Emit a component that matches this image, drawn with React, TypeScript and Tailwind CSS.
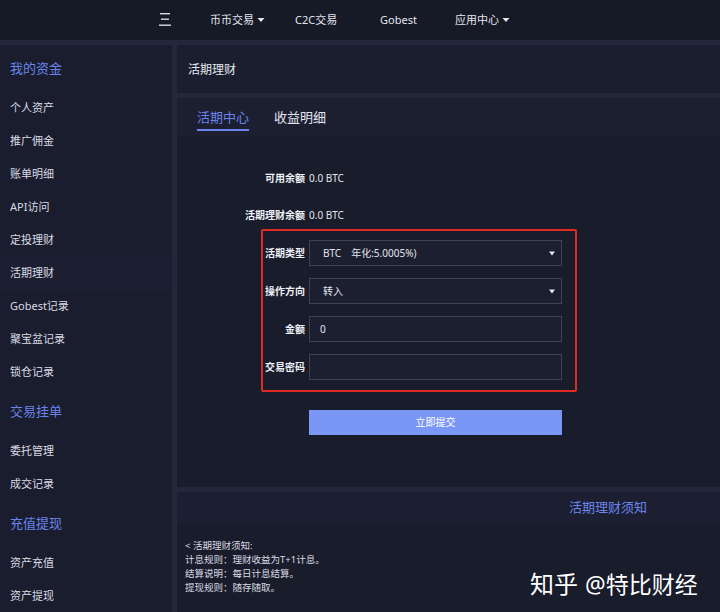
import React from "react";

const font = { fontFamily: '"Noto Sans","Noto Sans CJK SC",sans-serif' };

function Caret() {
  return (
    <svg width="8" height="6" viewBox="0 0 8 6" className="ml-[3px] inline-block">
      <path d="M0.5 1 L7.5 1 L4 5 Z" fill="#e5e7ee" />
    </svg>
  );
}

function SelCaret() {
  return (
    <svg width="6" height="5" viewBox="0 0 6 5">
      <path d="M0 0.5 L6 0.5 L3 4.5 Z" fill="#e5e7ee" />
    </svg>
  );
}

const sideGroups: { title: string; items: string[] }[] = [
  { title: "我的资金", items: ["个人资产", "推广佣金", "账单明细", "API访问", "定投理财", "活期理财", "Gobest记录", "聚宝盆记录", "锁仓记录"] },
  { title: "交易挂单", items: ["委托管理", "成交记录"] },
  { title: "充值提现", items: ["资产充值", "资产提现"] },
];

export default function App() {
  return (
    <div className="relative w-[720px] h-[612px] overflow-hidden bg-[#23273a] text-[#e3e5ee]" style={font}>
      {/* Header */}
      <div className="h-[40px] bg-[#161926] flex items-center text-[11px]">
        <div className="w-[158px]" />
        <svg width="14" height="13" viewBox="0 0 14 13" className="mt-[-2px]">
          <rect x="2" y="0" width="10" height="1.4" fill="#d8dae3" />
          <rect x="3" y="5.5" width="8" height="1.4" fill="#d8dae3" />
          <rect x="1" y="11.5" width="12" height="1.4" fill="#d8dae3" />
        </svg>
        <div className="ml-[38px] w-[85px] flex items-center">币币交易<Caret /></div>
        <div className="w-[85px]">C2C交易</div>
        <div className="w-[75px]">Gobest</div>
        <div className="flex items-center">应用中心<Caret /></div>
      </div>

      <div className="flex mt-[5px] h-[567px]">
        {/* Sidebar */}
        <div className="w-[172px] bg-[#1a1d2d] shrink-0 pt-[1px]">
          {sideGroups.map((g) => (
            <div key={g.title}>
              <div className="h-[46px] flex items-center pl-[10px] text-[13px] text-[#6b84ec]">{g.title}</div>
              <div>
                {g.items.map((it) => (
                  <div
                    key={it}
                    className={`h-[33px] flex items-center pl-[10px] text-[11px] text-[#d9dbe4] ${it === "活期理财" ? "bg-[#1c1f31]" : ""}`}
                  >
                    {it}
                  </div>
                ))}
              </div>
            </div>
          ))}
        </div>

        {/* Main */}
        <div className="ml-[5px] flex-1 flex flex-col">
          <div className="h-[48px] bg-[#1b1e2f] flex items-center pl-[11px] pt-[2px] text-[12px] text-[#e6e8f0]">活期理财</div>

          <div className="mt-[5px] h-[389px] bg-[#191c2b] flex flex-col">
            <div className="h-[39px] bg-[#1c1f30] flex items-end pl-[20px] text-[13px]">
              <div className="h-[39px] flex flex-col justify-end">
                <div className="text-[#6b84ec] leading-[20px]">活期中心</div>
                <div className="mt-[2px] mb-[6px] h-[2px] bg-[#6b84ec]" />
              </div>
              <div className="ml-[25px] h-[39px] flex flex-col justify-end">
                <div className="text-[#e3e5ee] leading-[20px]">收益明细</div>
                <div className="mt-[2px] mb-[6px] h-[2px]" />
              </div>
            </div>

            <div className="mt-[33px] flex items-center text-[10px] leading-[16px]">
              <div className="w-[128px] text-right font-bold text-[#eef0f6]">可用余额</div>
              <div className="ml-[4px] text-[#e3e5ee]">0.0 BTC</div>
            </div>
            <div className="mt-[21px] flex items-center text-[10px] leading-[16px]">
              <div className="w-[128px] text-right font-bold text-[#eef0f6] whitespace-nowrap flex justify-end">活期理财余额</div>
              <div className="ml-[4px] text-[#e3e5ee]">0.0 BTC</div>
            </div>

            <div className="mt-[6px] ml-[84px] w-[316px] h-[163px] border-2 border-[#e02a24] rounded-[2px] pt-[9px] flex flex-col gap-[12px]">
              {[
                { l: "活期类型", v: "BTC　年化:5.0005%)", sel: true },
                { l: "操作方向", v: "转入", sel: true },
                { l: "金额", v: "0", sel: false },
                { l: "交易密码", v: "", sel: false },
              ].map((r) => (
                <div key={r.l} className="flex items-center h-[26px]">
                  <div className="w-[42px] flex justify-end whitespace-nowrap text-[10px] font-bold text-[#eef0f6]">{r.l}</div>
                  <div className={`ml-[4px] w-[253px] h-[26px] border border-[#3d4257] bg-[#1c1f2f] flex items-center justify-between text-[10px] text-[#e3e5ee] ${r.sel ? "pl-[13px] pr-[6px]" : "pl-[10px]"}`}>
                    <span>{r.v}</span>
                    {r.sel && <SelCaret />}
                  </div>
                </div>
              ))}
            </div>

            <div className="mt-[18px] ml-[132px] w-[253px] h-[25px] bg-[#7a97f6] flex items-center justify-center text-[10px] text-white">
              立即提交
            </div>
          </div>

          <div className="mt-[5px] h-[31px] bg-[#1c1f31] flex items-center pl-[392px] text-[13px] text-[#6b84ec]">活期理财须知</div>
          <div className="flex-1 bg-[#191c2b] pl-[8px] pt-[16px] text-[9.5px] leading-[14px] text-[#d9dbe4]">
            <div className="whitespace-nowrap">&lt; 活期理财须知:</div>
            <div>计息规则：理财收益为T+1计息。</div>
            <div>结算说明：每日计息结算。</div>
            <div>提现规则：随存随取。</div>
          </div>
        </div>
      </div>

      <div className="absolute left-[530px] top-[569px] flex items-center text-white leading-[30px] whitespace-nowrap">
        <span className="text-[24px]">知乎</span>
        <span className="ml-[7px] text-[23px]">@特比财经</span>
      </div>
    </div>
  );
}
